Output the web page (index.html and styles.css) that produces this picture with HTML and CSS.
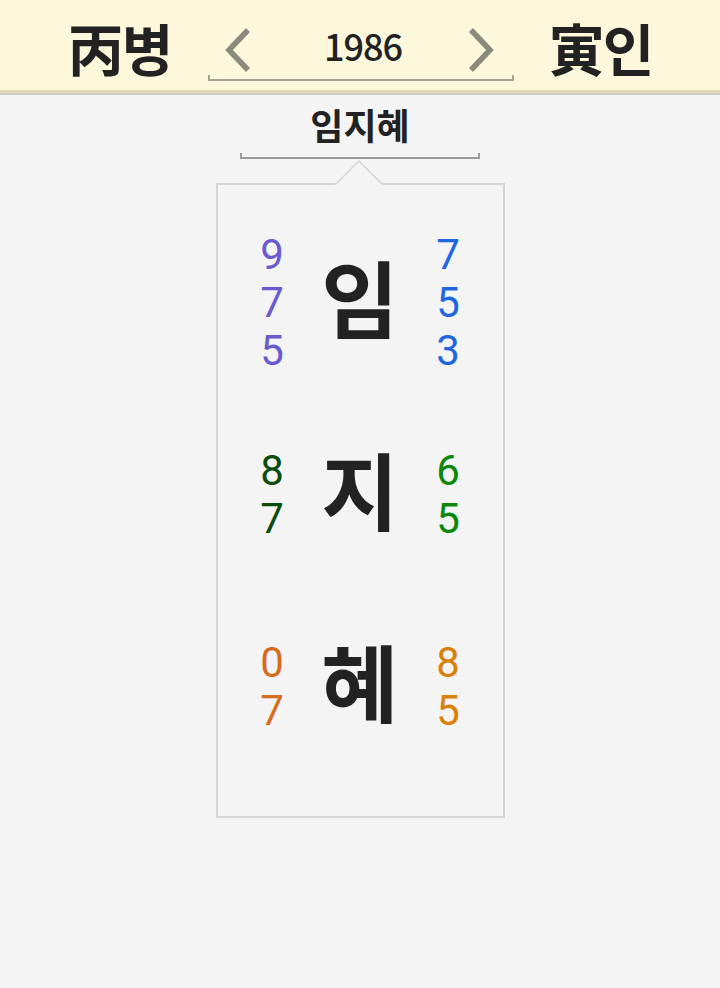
FILE: index.html
```html
<!DOCTYPE html>
<html lang="ko">
<head>
<meta charset="utf-8">
<title>丙병 1986 寅인</title>
<link rel="stylesheet" href="styles.css">
</head>
<body>
<header class="topbar">
  <div class="ganji">丙병</div>
  <div class="yearnav">
    <div class="yearrow">
      <svg class="chev" width="28" height="44" viewBox="0 0 28 44"><polyline points="24,2 5,22 24,42" fill="none" stroke="#8a8a7f" stroke-width="5.5"/></svg>
      <span class="year">1986</span>
      <svg class="chev" width="28" height="44" viewBox="0 0 28 44"><polyline points="4,2 23,22 4,42" fill="none" stroke="#8a8a7f" stroke-width="5.5"/></svg>
    </div>
    <div class="bracket bracket-year"></div>
  </div>
  <div class="ganji">寅인</div>
</header>
<main class="content">
  <div class="name">임지혜</div>
  <div class="bracket bracket-name"></div>
  <section class="card">
    <svg class="notch" width="48" height="25" viewBox="0 0 48 25">
      <polygon points="0,25 24,1 48,25" fill="#f4f4f4"/>
      <polyline points="1,24 24,1 47,24" fill="none" stroke="#d6d6d6" stroke-width="1.6"/>
    </svg>
    <div class="row">
      <div class="digits purple"><span>9</span><span>7</span><span>5</span></div>
      <div class="char">임</div>
      <div class="digits blue"><span>7</span><span>5</span><span>3</span></div>
    </div>
    <div class="row">
      <div class="digits dkgreen"><span>8</span><span>7</span></div>
      <div class="char">지</div>
      <div class="digits green"><span>6</span><span>5</span></div>
    </div>
    <div class="row">
      <div class="digits orange1"><span>0</span><span>7</span></div>
      <div class="char">혜</div>
      <div class="digits orange2"><span>8</span><span>5</span></div>
    </div>
  </section>
</main>
</body>
</html>
```
FILE: styles.css
```css
* { box-sizing: border-box; }
html, body { margin: 0; padding: 0; }
body {
  width: 720px;
  min-height: 988px;
  background: #f4f4f4;
  font-family: "Noto Sans CJK KR", "Noto Sans", sans-serif;
  color: #222222;
}
.topbar {
  height: 93px;
  padding-top: 4px;
  background: #fdf7dc;
  border-bottom: 3px solid #ded7bb;
  box-shadow: 0 2px 0 #cfcdc6;
  display: flex;
  align-items: center;
  justify-content: center;
}
.ganji {
  font-size: 56px;
  line-height: 56px;
  font-weight: 700;
  width: 104px;
  text-align: center;
  letter-spacing: -2px;
}
.yearnav {
  width: 306px;
  margin: 0 35px 0 36px;
  align-self: flex-start;
  margin-top: 21px;
  display: flex;
  flex-direction: column;
}
.yearrow {
  height: 50px;
  display: flex;
  align-items: center;
  justify-content: space-between;
  padding: 0 19px 0 16px;
}
.year {
  font-size: 36px;
  line-height: 40px;
  padding-bottom: 10px;
  font-weight: 500;
  letter-spacing: -1px;
  color: #222;
  margin-left: 8px;
}
.bracket {
  height: 6px;
  border: 2px solid;
  border-top: none;
}
.bracket-year { border-color: #a6a48f; }
.content {
  display: flex;
  flex-direction: column;
  align-items: center;
  padding-top: 11px;
}
.name {
  font-size: 36px;
  line-height: 40px;
  font-weight: 700;
}
.bracket-name {
  width: 240px;
  margin-top: 9px;
  border-color: #9c9c9c;
}
.card {
  position: relative;
  margin-top: 24px;
  width: 289px;
  height: 635px;
  border: 2px solid #d6d6d6;
  padding-top: 22px;
}
.notch {
  position: absolute;
  top: -25px;
  left: 50%;
  margin-left: -25px;
}
.row {
  height: 192px;
  display: grid;
  grid-template-columns: 40px 136px 40px;
  justify-content: center;
  align-items: center;
}
.digits {
  display: flex;
  flex-direction: column;
  align-items: center;
  font-family: Roboto, "Noto Sans", sans-serif;
  font-size: 42px;
  line-height: 48px;
  font-weight: 400;
}
.char {
  text-align: center;
  font-size: 84px;
  line-height: 96px;
  font-weight: 700;
  padding-bottom: 14px;
}
.purple { color: #6a5acd; }
.blue { color: #1f66e3; }
.dkgreen { color: #0b4b0b; }
.green { color: #098809; }
.orange1 { color: #d66c1e; }
.orange2 { color: #d9820a; }
```
